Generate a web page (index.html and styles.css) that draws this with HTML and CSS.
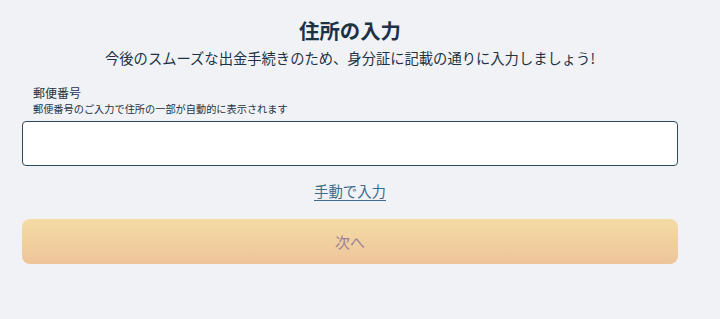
FILE: index.html
```html
<!doctype html>
<html lang="ja">
<head>
    <meta name="viewport" content="width=device-width">
    <meta charset="utf-8">
    <title>住所の入力</title>
    <link rel="stylesheet" href="styles.css">
</head>
<body>

<div class="page">
    <h1 class="title">住所の入力</h1>
    <p class="lead">今後のスムーズな出金手続きのため、身分証に記載の通りに入力しましょう!</p>

    <div class="field">
        <label class="field-label" for="zip">郵便番号</label>
        <div class="field-help">郵便番号のご入力で住所の一部が自動的に表示されます</div>
        <input class="field-input" id="zip" type="text"/>
    </div>

    <div class="manual">
        <a class="manual-link" href="#">手動で入力</a>
    </div>

    <button class="next" disabled>次へ</button>
</div>

</body>
</html>
```

FILE: styles.css
```css
html, body {
    margin: 0;
    padding: 0;
    background: #f0f2f5;
    color: #1c3346;
    font-family: "Noto Sans CJK JP", "Noto Sans", sans-serif;
}

.page {
    padding: 15px 42px 0 22px;
}

.title {
    margin: 0;
    text-align: center;
    font-size: 20.4px;
    line-height: 30px;
    font-weight: 700;
}

.lead {
    margin: 0;
    text-align: center;
    font-size: 14.3px;
    line-height: 26px;
}

.field {
    margin-top: 14px;
}
    .field-label {
        display: block;
        padding-left: 11px;
        font-size: 12px;
        line-height: 16px;
    }
    .field-help {
        padding-left: 11px;
        font-size: 10.2px;
        line-height: 16px;
    }
    .field-input {
        display: block;
        box-sizing: border-box;
        width: 100%;
        height: 45px;
        margin-top: 4px;
        border: 1.5px solid #2f4a5e;
        border-radius: 4px;
        background: #fff;
        font-size: 16px;
        padding: 0 12px;
    }

.manual {
    text-align: center;
    margin-top: 14px;
    line-height: 20px;
}
    .manual-link {
        color: #3f6b8f;
        font-size: 14.4px;
        text-decoration: underline;
        text-underline-offset: 3px;
    }

.next {
    display: block;
    width: 100%;
    height: 45px;
    margin-top: 18px;
    border: 0;
    border-radius: 8px;
    background: linear-gradient(#f4dca5, #eec49a);
    color: #9a7f95;
    font-family: inherit;
    font-size: 15px;
}
```
